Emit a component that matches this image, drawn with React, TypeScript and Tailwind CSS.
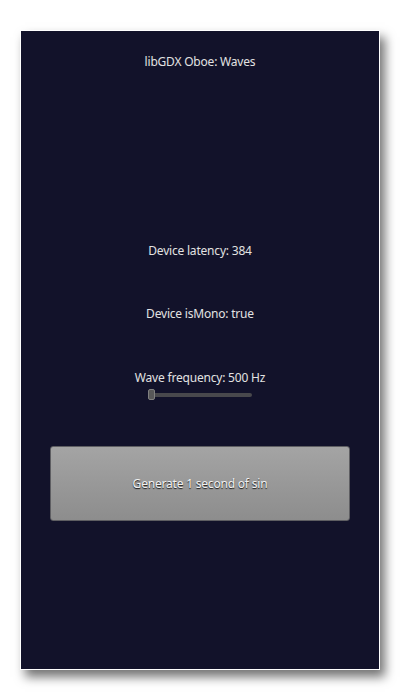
import React from "react";

export default function App() {
  return (
    <div className="w-[400px] h-[700px] bg-white pt-[30px] pl-[20px]" style={{ fontFamily: '"Noto Sans", "Open Sans", sans-serif' }}>
      <div className="w-[360px] h-[640px] bg-[#12122a] border border-white box-border shadow-[5px_7px_10px_rgba(0,0,0,0.55)] flex flex-col items-center text-[12px] leading-[16px] text-[#e2e2e2] tracking-[-0.2px]">
        <div className="mt-[23px]">libGDX Oboe: Waves</div>

        <div className="mt-[173px]">Device latency: 384</div>

        <div className="mt-[47px]">Device isMono: true</div>

        <div className="mt-[48px]">Wave frequency: 500 Hz</div>

        {/* frequency slider */}
        <div className="mt-[3px] h-[12px] w-[104px] flex items-center relative">
          <div className="w-full h-[4px] rounded-full bg-[#48484c]" />
          <div className="absolute left-0 top-0 w-[7px] h-[11px] rounded-[2px] bg-[#585858] border border-[#808080]" />
        </div>

        <button className="mt-[45px] w-[300px] h-[75px] rounded-[3px] border border-[#5e5e62] bg-gradient-to-b from-[#a4a4a4] to-[#8d8d8d] text-[12px] text-[#f2f2f2] [text-shadow:0_1px_1px_rgba(0,0,0,0.85)]">
          Generate 1 second of sin
        </button>
      </div>
    </div>
  );
}
